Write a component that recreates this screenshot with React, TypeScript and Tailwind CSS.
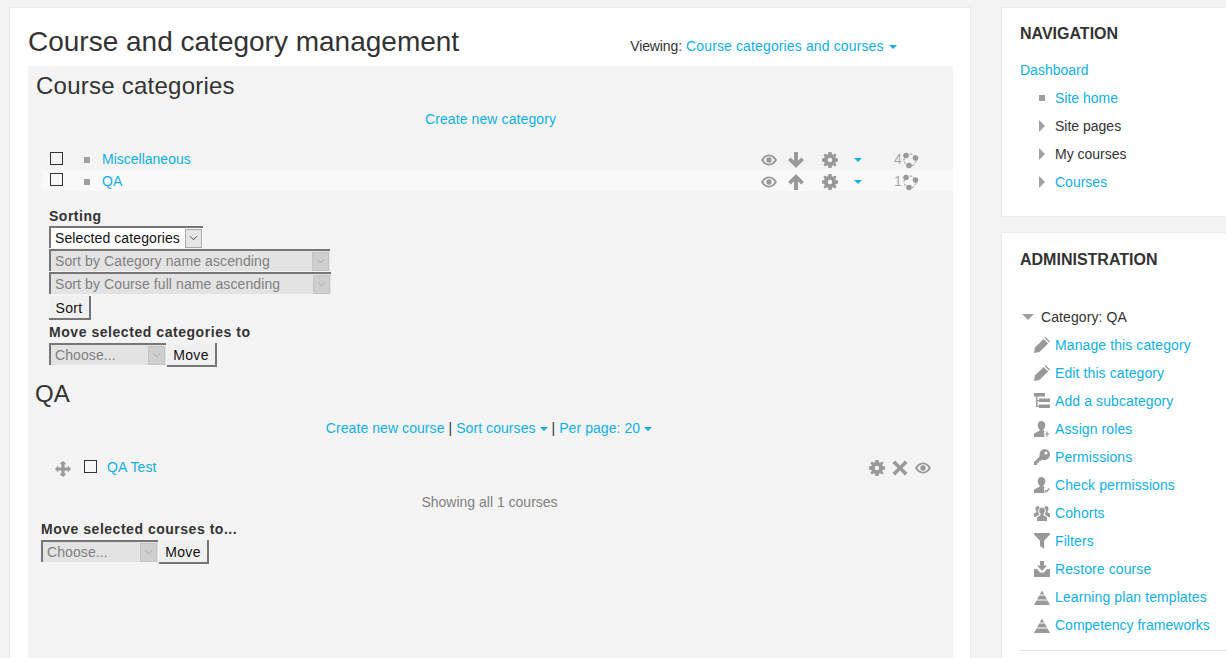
import React from "react";

const ICON = "#999999";
type IconProps = { className?: string };

const Eye = ({ className = "" }: IconProps) => (
  <svg viewBox="0 0 16 12" className={className} fill={ICON}>
    <path fillRule="evenodd" d="M8 .5C4.600.5 1.700 2.700 0 6c1.700 3.300 4.600 5.500 8 5.500s6.300-2.200 8-5.500C14.300 2.700 11.400.5 8 .5zM8 2.300c2.300 0 4.300 1.400 5.700 3.700-1.400 2.300-3.400 3.700-5.700 3.700S3.700 8.300 2.300 6C3.700 3.700 5.700 2.300 8 2.300zM8 3.300a2.700 2.700 0 1 0 0 5.400 2.700 2.700 0 0 0 0-5.400z" />
  </svg>
);
const ArrowDown = ({ className = "" }: IconProps) => (
  <svg viewBox="0 0 16 16" className={className} fill={ICON}>
    <path d="M6 0h4v8.800l3.200-3.200L15.900 8 8 16 .1 8l2.700-2.400L6 8.800z" />
  </svg>
);
const ArrowUp = ({ className = "" }: IconProps) => (
  <svg viewBox="0 0 16 16" className={className} fill={ICON}>
    <path d="M6 16h4V7.200l3.200 3.200L15.900 8 8 0 .1 8l2.700 2.400L6 7.200z" />
  </svg>
);
const Gear = ({ className = "" }: IconProps) => (
  <svg viewBox="0 0 16 16" className={className} fill={ICON}>
    <path fillRule="evenodd" d="M6.400 0h3.200l.4 2.200 1.200.5L13 1.400 14.600 3l-1.300 1.800.5 1.200 2.200.4v3.200l-2.200.4-.5 1.200 1.300 1.800-1.600 1.600-1.800-1.300-1.200.5-.4 2.200H6.400L6 13.800l-1.200-.5L3 14.600 1.400 13l1.300-1.800-.5-1.200L0 9.600V6.400L2.200 6l.5-1.200L1.400 3 3 1.400l1.800 1.300L6 2.200zM8 5.800a2.200 2.200 0 1 0 0 4.400 2.200 2.200 0 0 0 0-4.400z" />
  </svg>
);
const Caret = ({ color = "#0fb0e6" }: { color?: string }) => (
  <span className="inline-block w-0 h-0 border-x-[4px] border-x-transparent border-t-[4px]" style={{ borderTopColor: color }} />
);
const Cohort = ({ className = "" }: IconProps) => (
  <svg viewBox="0 0 18 18" className={className} fill={ICON}>
    <circle cx="9" cy="9" r="6" fill="none" stroke={ICON} strokeWidth="1" strokeDasharray="3 1.500" />
    <circle cx="5" cy="4.500" r="2.800" />
    <circle cx="14.500" cy="7" r="2.800" />
    <circle cx="8" cy="14.500" r="2.800" />
  </svg>
);
const Cross = ({ className = "" }: IconProps) => (
  <svg viewBox="0 0 16 16" className={className} fill={ICON}>
    <path d="M3 .5 8 5.500l5-5L15.500 3l-5 5 5 5-2.500 2.500-5-5-5 5L.5 13l5-5-5-5z" />
  </svg>
);
const Move = ({ className = "" }: IconProps) => (
  <svg viewBox="0 0 16 16" className={className} fill={ICON}>
    <path d="M8 0L11.600 3.200H9.600V6.400H12.800V4.400L16 8L12.800 11.600V9.600H9.600V12.800H11.600L8 16L4.400 12.800H6.400V9.600H3.200V11.600L0 8L3.200 4.400V6.400H6.400V3.200H4.400Z" />
  </svg>
);
const Pencil = ({ className = "" }: IconProps) => (
  <svg viewBox="0 0 16 16" className={className} fill={ICON}>
    <path d="M0 16L.9 10.600 9.600 1.900 14.100 6.400 5.400 15.100zM10.600.9 11.500 0 16 4.500 15.100 5.400z" />
  </svg>
);
const Tree = ({ className = "" }: IconProps) => (
  <svg viewBox="0 0 16 16" className={className} fill={ICON}>
    <path d="M0 0h11v3.500H0zM2 3h1.500v11H2zM2 7h4v1.200H2zM2 12.500h4v1.200H2zM5 5.500h11v3.500H5zM5 11.500h11V15H5z" />
  </svg>
);
const User = ({ badge, className = "" }: IconProps & { badge?: "plus" | "check" }) => (
  <svg viewBox="0 0 16 16" className={className} fill={ICON}>
    <path d="M7.500 0c2.200 0 3.800 1.700 3.800 4.200 0 1.700-.8 3.200-1.800 4v1.600L15 12.500V16H0v-3.500l5.500-2.700V8.200c-1-.8-1.800-2.300-1.800-4C3.700 1.700 5.300 0 7.500 0z" />
    <circle cx="13" cy="13" r="3.200" fill="#ffffff" />
    {badge === "plus" && <path d="M12.400 10.600h1.200v1.800h1.800v1.200h-1.800v1.800h-1.200v-1.800h-1.800v-1.200h1.800z" fill={ICON} />}
    {badge === "check" && <path d="M10.700 13l1.700 1.700 2.900-3.200" stroke={ICON} strokeWidth="1.300" fill="none" />}
  </svg>
);
const Key = ({ className = "" }: IconProps) => (
  <svg viewBox="0 0 16 16" className={className} fill={ICON}>
    <path fillRule="evenodd" d="M10.500 0A5.500 5.500 0 1 1 8 10.400L6.500 12H5v1.500H3.500V15l-1 1H0v-3l5.800-5.800A5.500 5.500 0 0 1 10.500 0zm1.500 2.500a1.500 1.500 0 1 0 0 3 1.500 1.500 0 0 0 0-3z" />
  </svg>
);
const Cohorts = ({ className = "" }: IconProps) => (
  <svg viewBox="0 0 16 16" className={className} fill={ICON}>
    <path d="M8 2.500c1.600 0 2.800 1.400 2.800 3.300 0 1.300-.6 2.400-1.400 3v1.200L13 12.500V16H3v-3.500L6.600 10V8.800c-.8-.6-1.400-1.700-1.400-3C5.200 3.900 6.400 2.500 8 2.500z" />
    <path d="M3.500 1c1.100 0 1.900.8 2.200 2-.9.700-1.500 1.800-1.500 3.200 0 1 .4 2 1 2.800v.5L1.700 12H0V8.500l2.500-1.300v-.9C1.900 5.700 1.500 4.700 1.500 3.600 1.500 2.100 2.400 1 3.500 1zM12.500 1c1.100 0 2 1.100 2 2.600 0 1.100-.4 2.100-1 2.700v.9L16 8.500V12h-1.700l-3.500-2.500V9c.6-.8 1-1.800 1-2.800 0-1.400-.6-2.500-1.500-3.200.3-1.200 1.100-2 2.200-2z" />
  </svg>
);
const Filter = ({ className = "" }: IconProps) => (
  <svg viewBox="0 0 16 16" className={className} fill={ICON}>
    <path d="M0 0h16v1.500l-5.800 6.300V16L6 13V7.800L0 1.500z" />
  </svg>
);
const Restore = ({ className = "" }: IconProps) => (
  <svg viewBox="0 0 16 16" className={className} fill={ICON}>
    <path d="M6 0h4v4.500h3L8 10 3 4.500h3z" />
    <path d="M0 8h3l3 3.500h4L13 8h3v8H0z" />
  </svg>
);
const Pyramid = ({ className = "" }: IconProps) => (
  <svg viewBox="0 0 16 16" className={className} fill={ICON}>
    <path d="M8 1.500L10.200 5.500H5.800zM5.200 6.500H10.800L13 10.500H3zM2.500 11.500H13.500L16 16H0z" />
  </svg>
);

const Link = ({ children }: { children: React.ReactNode }) => (
  <a className="text-[#0fb0e6]">{children}</a>
);

const FakeSelect = ({ label, width, disabled }: { label: string; width: string; disabled?: boolean }) => (
  <div
    className={`${width} h-[22px] flex items-center justify-between border-t-2 border-l-2 border-t-[#767676] border-l-[#767676] pl-1 pr-px text-[14px] leading-none ${
      disabled ? "bg-[#e3e3e3] text-[#808080]" : "bg-white text-[#111111]"
    }`}
  >
    <span className="whitespace-nowrap">{label}</span>
    <span className={`w-[17px] h-[19px] flex items-center justify-center border ${disabled ? "bg-[#cfcfcf] border-[#c4c4c4]" : "bg-[#e6e6e6] border-[#a9a9a9]"}`}>
      <svg viewBox="0 0 10 6" className="w-[9px] h-[6px]" fill="none" stroke={disabled ? "#a6a6a6" : "#444444"} strokeWidth="1">
        <path d="M1 1l4 4 4-4" />
      </svg>
    </span>
  </div>
);

const Btn = ({ label, width }: { label: string; width: string }) => (
  <div className={`${width} h-6 pt-[2px] flex items-center justify-center bg-[#f0f0f0] border-r-2 border-b-2 border-r-[#767676] border-b-[#767676] text-[14px] text-[#111111] tracking-[0.3px]`}>
    {label}
  </div>
);

const Check = () => (
  <span className="block w-[13px] h-[13px] border border-[#333333] bg-[#f7f7f7]" />
);

const CategoryRow = ({ name, count, up, alt }: { name: string; count: string; up?: boolean; alt?: boolean }) => (
  <div className={`h-[21px] flex items-center ${alt ? "bg-[#f9f9f9] pt-[2px]" : ""}`}>
    <div className={`w-[8px] ml-[8px] ${alt ? "-mt-[5px]" : "-mt-[3px]"}`}><Check /></div>
    <span className="ml-[26px] w-[6px] h-[6px] bg-[#a0a0a0]" />
    <span className="ml-[12px] text-[14px] tracking-normal"><Link>{name}</Link></span>
    <div className="ml-auto flex items-center w-[192px] shrink-0">
      <Eye className="w-[16px] h-[12px]" />
      <span className="ml-[11px]">{up ? <ArrowUp className="w-[16px] h-[16px]" /> : <ArrowDown className="w-[16px] h-[16px]" />}</span>
      <Gear className="ml-[18px] w-[16px] h-[16px]" />
      <span className="ml-[16px] flex items-center"><Caret /></span>
      <span className="ml-[32px] text-[14px] text-[#a8a8a8]">{count}</span>
      <Cohort className="w-[18px] h-[18px] -ml-px" />
    </div>
  </div>
);

const NavItem = ({ icon, children }: { icon: React.ReactNode; children: React.ReactNode }) => (
  <div className="h-[28px] flex items-center text-[14px] text-[#333333]">
    <span className="w-[16px] flex justify-center mr-[5px] shrink-0">{icon}</span>
    {children}
  </div>
);

const Square = () => <span className="w-[6px] h-[6px] bg-[#a0a0a0]" />;
const TriRight = () => <span className="w-0 h-0 border-y-[6px] border-y-transparent border-l-[6px] border-l-[#a0a0a0]" />;

const adminItems: [React.ReactNode, string][] = [
  [<Pencil className="w-4 h-4" />, "Manage this category"],
  [<Pencil className="w-4 h-4" />, "Edit this category"],
  [<Tree className="w-4 h-4" />, "Add a subcategory"],
  [<User badge="plus" className="w-4 h-4" />, "Assign roles"],
  [<Key className="w-4 h-4" />, "Permissions"],
  [<User badge="check" className="w-4 h-4" />, "Check permissions"],
  [<Cohorts className="w-4 h-4" />, "Cohorts"],
  [<Filter className="w-4 h-4" />, "Filters"],
  [<Restore className="w-4 h-4" />, "Restore course"],
  [<Pyramid className="w-4 h-4" />, "Learning plan templates"],
  [<Pyramid className="w-4 h-4" />, "Competency frameworks"],
];

export default function App() {
  return (
    <div
      className="h-[658px] w-[1226px] overflow-hidden bg-[#f3f3f3] flex items-start pt-[7px] pl-[9px] text-[14px] text-[#333333] tracking-[0.1px]"
      style={{ fontFamily: '"Liberation Sans", Arial, sans-serif' }}
    >
      <main className="w-[962px] h-[700px] shrink-0 bg-white border border-[#ebebeb] pl-[18px] pr-[17px]">
        <header className="h-[58px] flex">
          <h1 className="text-[28px] leading-[31px] mt-[18px] whitespace-nowrap tracking-normal">Course and category management</h1>
          <div className="ml-[171px] mt-[30px] whitespace-nowrap leading-[17px] tracking-[0.13px]">
            <span className="tracking-[-0.1px]">Viewing:</span> <Link>Course categories and courses</Link>{" "}
            <span className="relative -top-[2px] ml-px"><Caret /></span>
          </div>
        </header>

        <section className="h-[640px] bg-[#f4f4f4]">
          <h2 className="text-[24px] leading-[38px] pl-2 pt-px h-[38px] tracking-[0.24px]">Course categories</h2>
          <div className="mt-[5px] h-[20px] leading-[20px] text-center"><Link>Create new category</Link></div>

          <div className="mt-[20px] ml-[14px]">
            <CategoryRow name="Miscellaneous" count="4" />
            <CategoryRow name="QA" count="1" up alt />
          </div>

          <div className="pl-[21px]">
            <div className="mt-[16px] h-[18px] leading-[18px] font-bold tracking-[0.5px]">Sorting</div>
            <div className="mt-px"><FakeSelect label="Selected categories" width="w-[154px]" /></div>
            <div className="mt-px"><FakeSelect label="Sort by Category name ascending" width="w-[281px]" disabled /></div>
            <div className="mt-px"><FakeSelect label="Sort by Course full name ascending" width="w-[282px]" disabled /></div>
            <div className="mt-[2px]"><Btn label="Sort" width="w-[42px]" /></div>
            <div className="mt-[3px] h-[18px] leading-[18px] font-bold tracking-[0.55px]">Move selected categories to</div>
            <div className="mt-[2px] flex items-start gap-px">
              <FakeSelect label="Choose..." width="w-[117px]" disabled />
              <Btn label="Move" width="w-[50px]" />
            </div>
          </div>

          <h3 className="mt-[12px] pl-[7px] text-[24px] leading-[30px]">QA</h3>
          <div className="mt-[9px] h-[20px] leading-[20px] text-center tracking-[0.07px] pr-[3px]">
            <Link>Create new course</Link> | <Link>Sort courses</Link>{" "}
            <span className="relative -top-[2px]"><Caret /></span> | <Link>Per page: 20</Link>{" "}
            <span className="relative -top-[2px]"><Caret /></span>
          </div>

          <div className="mt-[19px] h-[22px] flex items-center pl-[27px] pr-[22px]">
            <Move className="w-4 h-4 mt-[2px]" />
            <span className="ml-[13px] -mt-[3px]"><Check /></span>
            <span className="ml-[10px] -mt-px"><Link>QA Test</Link></span>
            <div className="ml-auto flex items-center gap-[7px]">
              <Gear className="w-4 h-4" />
              <Cross className="w-4 h-4" />
              <Eye className="w-4 h-3" />
            </div>
          </div>

          <div className="mt-[13px] h-[20px] leading-[20px] text-center text-[#808080] pr-[2px] tracking-normal">Showing all 1 courses</div>

          <div className="pl-[13px]">
            <div className="mt-[8px] h-[18px] leading-[18px] font-bold tracking-[0.52px]">Move selected courses to...</div>
            <div className="mt-[2px] flex items-start gap-px">
              <FakeSelect label="Choose..." width="w-[117px]" disabled />
              <Btn label="Move" width="w-[50px]" />
            </div>
          </div>
        </section>
      </main>

      <aside className="ml-[30px] w-[300px] shrink-0 tracking-normal">
        <div className="h-[210px] bg-white border border-[#ebebeb] pl-[18px]">
          <h2 className="mt-[14px] text-[16px] leading-[22px] font-bold pt-px h-[22px]">NAVIGATION</h2>
          <div className="mt-[16px] h-[20px] leading-[20px]"><Link>Dashboard</Link></div>
          <div className="mt-[4px] pl-[14px]">
            <NavItem icon={<Square />}><Link>Site home</Link></NavItem>
            <NavItem icon={<TriRight />}>Site pages</NavItem>
            <NavItem icon={<TriRight />}>My courses</NavItem>
            <NavItem icon={<TriRight />}><Link>Courses</Link></NavItem>
          </div>
        </div>

        <div className="mt-[15px] h-[500px] bg-white border border-[#ebebeb] pl-[18px]">
          <h2 className="mt-[16px] text-[16px] leading-[22px] font-bold">ADMINISTRATION</h2>
          <div className="mt-[32px] h-[28px] flex items-center">
            <span className="ml-[2px] w-0 h-0 border-x-[6px] border-x-transparent border-t-[6px] border-t-[#a0a0a0]" />
            <span className="ml-[7px] tracking-[0.1px]">Category: QA</span>
          </div>
          <div className="pl-[14px]">
            {adminItems.map(([icon, label]) => (
              <NavItem key={label} icon={icon}>
                <span className={label.startsWith("Competency") ? "" : "tracking-[0.1px]"}><Link>{label}</Link></span>
              </NavItem>
            ))}
          </div>
          <div className="mt-[11px] h-px bg-[#e3e3e3]" />
        </div>
      </aside>
    </div>
  );
}
